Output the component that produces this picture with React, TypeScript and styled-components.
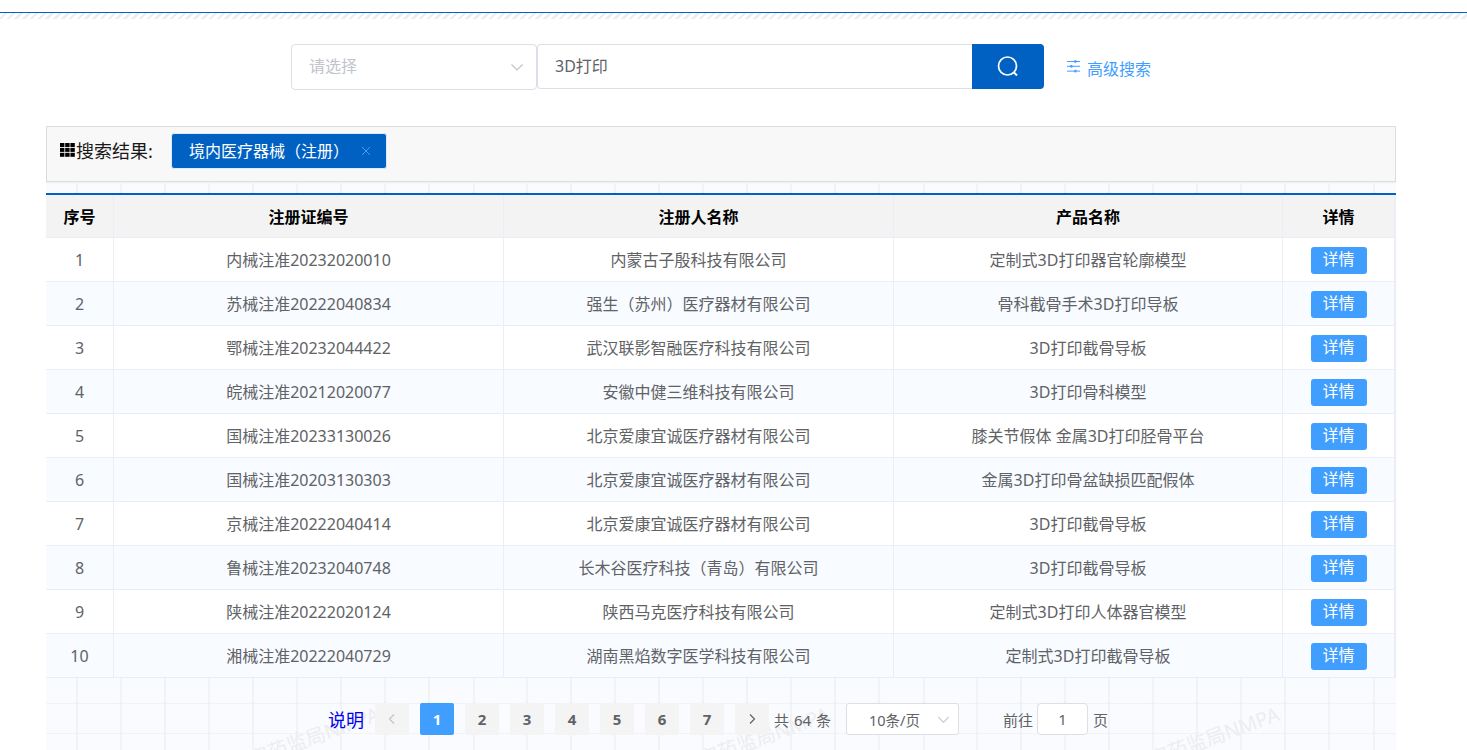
import React from "react";
import styled, { createGlobalStyle } from "styled-components";

const Global = createGlobalStyle`
  html, body { margin: 0; height: 100%; overflow: hidden; background: #fff; }
  body, input, button { font-family: "Noto Sans", "Noto Sans CJK SC", "Liberation Sans", sans-serif; }
  * { box-sizing: border-box; }
`;

const TopRule = styled.div`
  margin-top: 12px;
  height: 1px;
  background: #0061c2;
`;
const Hatch = styled.div`
  height: 6px;
  background: repeating-linear-gradient(135deg, #fff 0 3px, #eeeeee 3px 5.5px);
`;
const SearchRow = styled.div`
  display: flex;
  align-items: flex-start;
  margin-top: 25px;
  padding-left: 291px;
  height: 46px;
`;
const SelectBox = styled.div`
  width: 246px;
  height: 46px;
  border: 1px solid #dcdfe6;
  border-radius: 4px;
  display: flex;
  align-items: center;
  justify-content: space-between;
  padding: 0 12px 5px 17px;
  font-size: 16px;
  color: #c0c4cc;
  svg { margin-top: 5px; }
`;
const SearchInput = styled.div`
  width: 435px;
  height: 45px;
  border: 1px solid #dcdfe6;
  border-right: 0;
  border-radius: 4px 0 0 4px;
  display: flex;
  align-items: center;
  padding: 0 0 3px 17px;
  font-size: 16px;
  color: #606266;
`;
const SearchButton = styled.button`
  width: 72px;
  height: 45px;
  border: 0;
  padding: 0;
  background: #0061c2;
  border-radius: 0 4px 4px 0;
  display: flex;
  align-items: center;
  justify-content: center;
`;
const AdvancedLink = styled.a`
  margin: 14px 0 0 23px;
  display: flex;
  align-items: center;
  gap: 7px;
  font-size: 16px;
  line-height: 22px;
  color: #409eff;
  svg { margin-bottom: 6px; }
`;
const Main = styled.main`
  margin: 36px 71px 0 46px;
`;
const ResultPanel = styled.section`
  height: 56px;
  border: 1px solid #dcdcdc;
  background: #f8f8f8;
  display: flex;
  align-items: flex-start;
  padding: 6px 0 0 13px;
`;
const ResultLabel = styled.div`
  display: flex;
  align-items: center;
  gap: 1px;
  height: 33px;
  width: 111px;
  white-space: nowrap;
  font-size: 18px;
  color: #1a1a1a;
`;
const ResultTag = styled.div`
  width: 216px;
  height: 36px;
  background: #0061c2;
  border: 1px solid #d9ecff;
  border-radius: 3px;
  display: flex;
  align-items: center;
  padding: 0 0 2px 17px;
  font-size: 16px;
  white-space: nowrap;
  color: #fff;
`;
const TagClose = styled.span`
  margin: 2px 0 0 12px;
  display: flex;
`;
const Sheet = styled.div`
  position: relative;
  background: #fafbfe;
  padding-top: 11px;
  height: 568px;
`;
const SheetBackdrop = styled.svg`
  position: absolute;
  left: 0;
  top: 0;
  width: 100%;
  height: 100%;
`;
const Table = styled.table`
  position: relative;
  width: 1350px;
  border-collapse: separate;
  border-spacing: 0;
  table-layout: fixed;
  border-top: 2px solid #0061c2;
  font-size: 16px;
`;
const HeadCell = styled.th`
  height: 43px;
  padding: 0;
  background: #f3f3f3;
  color: #000;
  font-size: 16px;
  font-weight: 700;
  text-align: center;
  border-right: 1px solid #ebeef5;
  border-bottom: 1px solid #ebeef5;
  &:last-child { border-right-width: 2px; }
`;
const Row = styled.tr<{ $striped: boolean }>`
  background: ${(p) => (p.$striped ? "#f8fbff" : "#fff")};
`;
const Cell = styled.td`
  height: 44px;
  padding: 0 0 2px;
  color: #606266;
  text-align: center;
  border-right: 1px solid #ebeef5;
  border-bottom: 1px solid #ebeef5;
  &:first-child { padding-bottom: 0; }
  &:last-child { border-right-width: 2px; padding-bottom: 0; }
`;
const DetailButton = styled.button`
  display: block;
  margin: 1px auto 0;
  width: 56px;
  height: 27px;
  border: 0;
  padding: 0 0 1px;
  border-radius: 3px;
  background: #409eff;
  color: #fff;
  font-size: 16px;
  line-height: 25px;
`;
const Pagination = styled.nav`
  position: relative;
  display: flex;
  align-items: center;
  height: 32px;
  margin-top: 25px;
  padding-left: 282px;
  font-size: 15px;
  color: #606266;
`;
const Note = styled.a`
  margin-right: 11px;
  font-size: 18px;
  color: #0000ee;
`;
const Pager = styled.div`
  display: flex;
  gap: 11px;
`;
const PageButton = styled.span<{ $active?: boolean }>`
  width: 34px;
  height: 32px;
  border-radius: 2px;
  display: flex;
  align-items: center;
  justify-content: center;
  background: ${(p) => (p.$active ? "#409eff" : "#f4f4f5")};
  color: ${(p) => (p.$active ? "#fff" : "#606266")};
  font-size: 15px;
  font-weight: 700;
`;
const Total = styled.span`
  margin-left: 5px;
  width: 57px;
  white-space: nowrap;
  word-spacing: 1px;
`;
const SizeSelect = styled.div`
  margin-left: 15px;
  width: 113px;
  height: 32px;
  border: 1px solid #dcdfe6;
  border-radius: 3px;
  background: #fff;
  display: flex;
  align-items: center;
  justify-content: space-between;
  padding: 0 8px 0 22px;
  font-size: 14.5px;
`;
const Jump = styled.span`
  margin-left: 44px;
`;
const JumpInput = styled.span`
  margin: 0 5px 0 4px;
  width: 51px;
  height: 32px;
  border: 1px solid #dcdfe6;
  border-radius: 4px;
  background: #fff;
  display: flex;
  align-items: center;
  justify-content: center;
`;

const Chevron = ({ d, color, size = 14 }: { d: string; color: string; size?: number }) => (
  <svg width={size} height={size} viewBox="0 0 14 14" fill="none" stroke={color} strokeWidth="1.2">
    <path d={d} />
  </svg>
);
const DOWN = "M1.5 4.5 7 10l5.5-5.5";

const rows = [
  ["内械注准20232020010", "内蒙古子殷科技有限公司", "定制式3D打印器官轮廓模型"],
  ["苏械注准20222040834", "强生（苏州）医疗器材有限公司", "骨科截骨手术3D打印导板"],
  ["鄂械注准20232044422", "武汉联影智融医疗科技有限公司", "3D打印截骨导板"],
  ["皖械注准20212020077", "安徽中健三维科技有限公司", "3D打印骨科模型"],
  ["国械注准20233130026", "北京爱康宜诚医疗器材有限公司", "膝关节假体 金属3D打印胫骨平台"],
  ["国械注准20203130303", "北京爱康宜诚医疗器材有限公司", "金属3D打印骨盆缺损匹配假体"],
  ["京械注准20222040414", "北京爱康宜诚医疗器材有限公司", "3D打印截骨导板"],
  ["鲁械注准20232040748", "长木谷医疗科技（青岛）有限公司", "3D打印截骨导板"],
  ["陕械注准20222020124", "陕西马克医疗科技有限公司", "定制式3D打印人体器官模型"],
  ["湘械注准20222040729", "湖南黑焰数字医学科技有限公司", "定制式3D打印截骨导板"],
];

const verticals = [31, 75, 119, 163, 207, 251, 295, 339, 383, 428];

export default function App() {
  return (
    <>
      <Global />
      <TopRule />
      <Hatch />
      <SearchRow>
        <SelectBox>
          请选择
          <Chevron d={DOWN} color="#c0c4cc" />
        </SelectBox>
        <SearchInput>3D打印</SearchInput>
        <SearchButton aria-label="搜索">
          <svg width="24" height="24" viewBox="0 0 24 24" fill="none" stroke="#fff" strokeWidth="1.7">
            <circle cx="11.5" cy="11" r="9" />
            <path d="M18 17.5 21 20.5" strokeWidth="2" />
          </svg>
        </SearchButton>
        <AdvancedLink>
          <svg width="13" height="13" viewBox="0 0 13 13" fill="#409eff">
            <rect x="0" y="1" width="13" height="1" />
            <rect x="0" y="5.8" width="13" height="1" />
            <rect x="0" y="10.6" width="13" height="1" />
            <rect x="7.4" y="0.2" width="2" height="2.6" />
            <rect x="3.4" y="5" width="2" height="2.6" />
            <rect x="7.4" y="9.8" width="2" height="2.6" />
          </svg>
          高级搜索
        </AdvancedLink>
      </SearchRow>
      <Main>
        <ResultPanel>
          <ResultLabel>
            <svg width="15" height="14" viewBox="0 0 15 14" fill="#000">
              {[0, 5.2, 10.4].flatMap((x) =>
                [0, 4.9, 9.8].map((y) => <rect key={`${x}-${y}`} x={x} y={y} width="4.4" height="4" />)
              )}
            </svg>
            搜索结果:
          </ResultLabel>
          <ResultTag>
            境内医疗器械（注册）
            <TagClose>
              <svg width="10" height="10" viewBox="0 0 10 10" stroke="#409eff" strokeWidth="1">
                <path d="M1 1 9 9M9 1 1 9" />
              </svg>
            </TagClose>
          </ResultTag>
        </ResultPanel>
        <Sheet>
          <SheetBackdrop aria-hidden="true">
            <defs>
              <pattern id="grid" width="450" height="30" patternUnits="userSpaceOnUse" patternTransform="translate(0 -18)">
                <rect y="29" width="450" height="1.6" fill="#f2f3f6" />
                {verticals.map((x) => (
                  <g key={x}>
                    <rect x={x - 1} width="2" height="30" fill="#f2f3f6" />
                    <circle cx={x} cy="29.8" r="2" fill="#eff0f3" />
                  </g>
                ))}
              </pattern>
            </defs>
            <rect width="100%" height="100%" fill="url(#grid)" />
            <rect width="100%" height="1.5" fill="#f2f3f6" />
            {[335, 785, 1235].map((x) => (
              <text
                key={x}
                x={x}
                y={538}
                transform={`rotate(-20 ${x} 538)`}
                textAnchor="end"
                fontSize="20"
                fill="#ecedf0"
              >
                国家药监局NMPA
              </text>
            ))}
          </SheetBackdrop>
          <Table>
            <colgroup>
              <col width="68" />
              <col width="390" />
              <col width="390" />
              <col width="389" />
              <col width="113" />
            </colgroup>
            <thead>
              <tr>
                <HeadCell>序号</HeadCell>
                <HeadCell>注册证编号</HeadCell>
                <HeadCell>注册人名称</HeadCell>
                <HeadCell>产品名称</HeadCell>
                <HeadCell>详情</HeadCell>
              </tr>
            </thead>
            <tbody>
              {rows.map((r, i) => (
                <Row key={r[0]} $striped={i % 2 === 1}>
                  <Cell>{i + 1}</Cell>
                  <Cell>{r[0]}</Cell>
                  <Cell>{r[1]}</Cell>
                  <Cell>{r[2]}</Cell>
                  <Cell>
                    <DetailButton>详情</DetailButton>
                  </Cell>
                </Row>
              ))}
            </tbody>
          </Table>
          <Pagination>
            <Note>说明</Note>
            <Pager>
              <PageButton>
                <Chevron d="M9 2.5 4.5 7 9 11.5" color="#c0c4cc" />
              </PageButton>
              {[1, 2, 3, 4, 5, 6, 7].map((n) => (
                <PageButton key={n} $active={n === 1}>
                  {n}
                </PageButton>
              ))}
              <PageButton>
                <Chevron d="M5 2.5 9.5 7 5 11.5" color="#606266" />
              </PageButton>
            </Pager>
            <Total>共 64 条</Total>
            <SizeSelect>
              10条/页
              <Chevron d={DOWN} color="#c0c4cc" size={13} />
            </SizeSelect>
            <Jump>前往</Jump>
            <JumpInput>1</JumpInput>
            页
          </Pagination>
        </Sheet>
      </Main>
    </>
  );
}
